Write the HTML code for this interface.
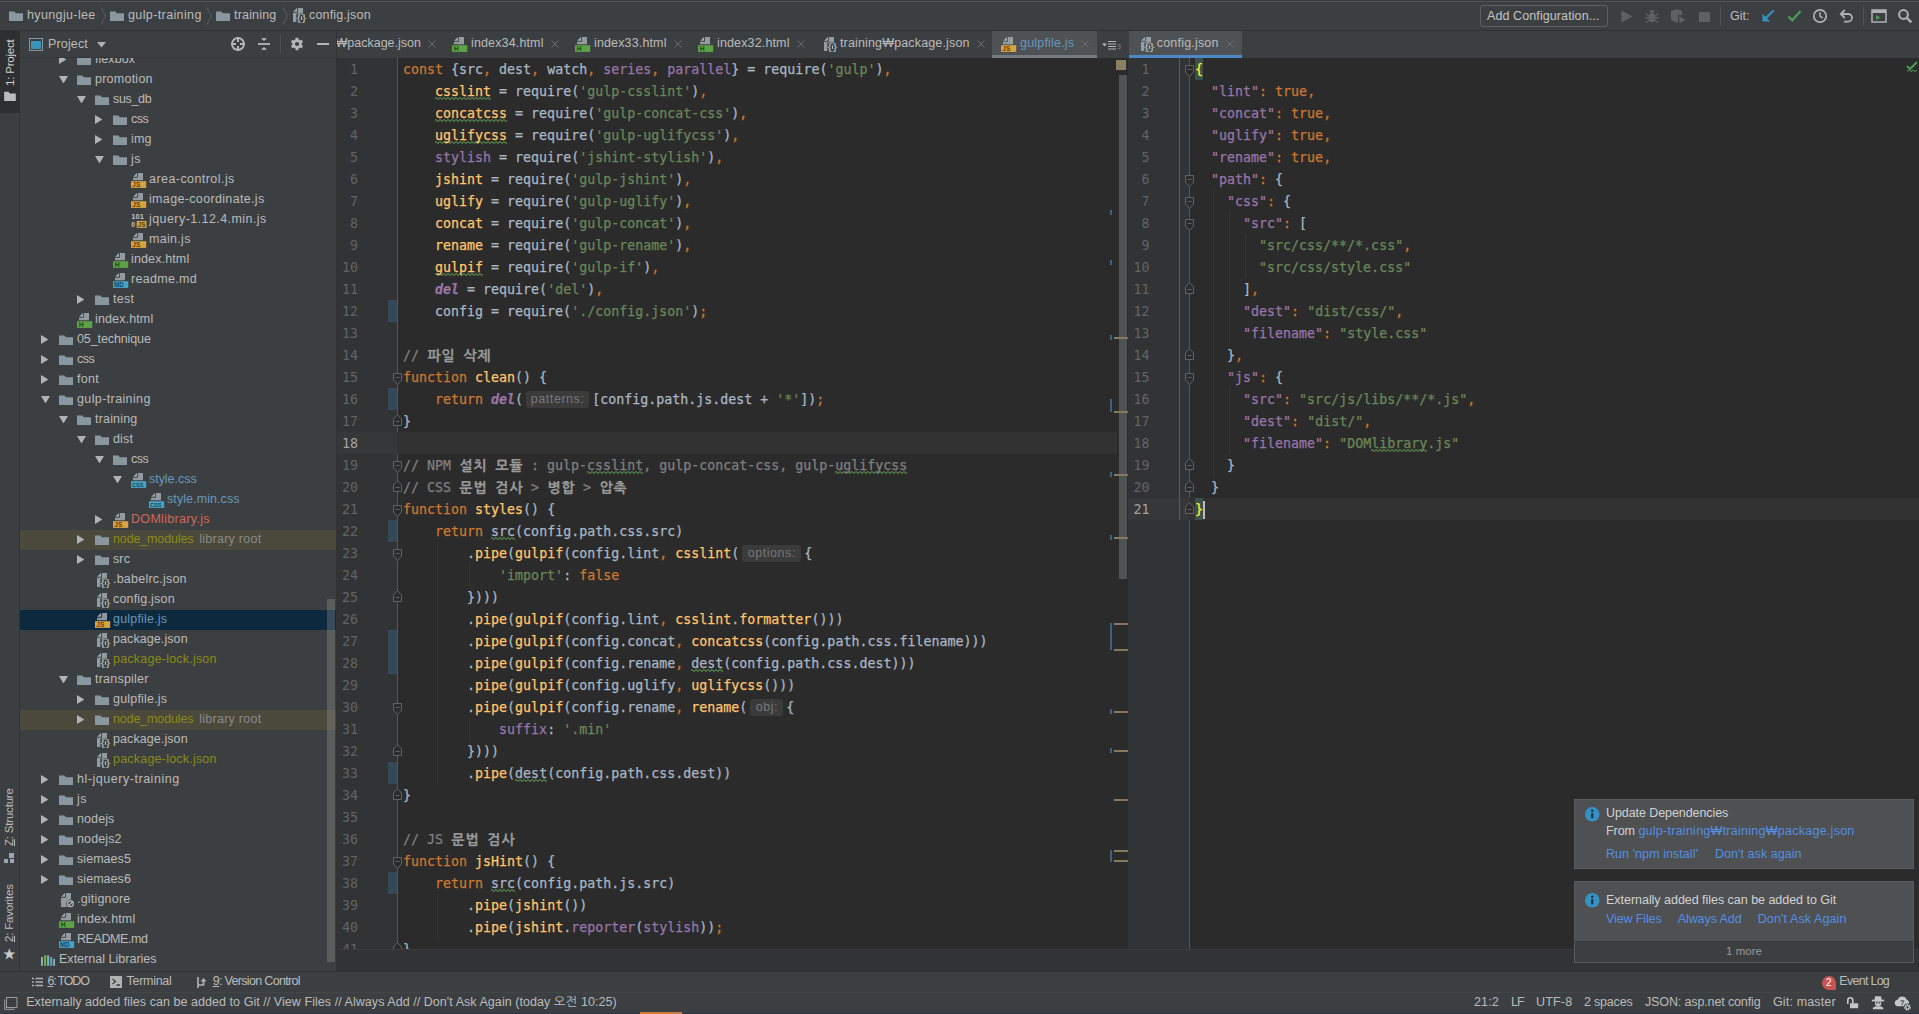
<!DOCTYPE html>
<html lang="ko"><head><meta charset="utf-8"><title>gulpfile.js - WebStorm</title>
<style>
*{box-sizing:border-box;margin:0;padding:0}
html,body{width:1919px;height:1014px;overflow:hidden;background:#3c3f41}
body{position:relative;font-family:"Liberation Sans","NanumGothic","Noto Sans CJK KR",sans-serif;font-size:12.5px;color:#bbbbbb;line-height:20px}
.abs{position:absolute}
.ui{font-family:"Liberation Sans","NanumGothic","Noto Sans CJK KR",sans-serif;font-size:12px;color:#bbb;white-space:pre}
/* top nav */
#nav{left:0;top:0;width:1919px;height:31px;background:#3c3f41;border-top:1px solid #3a3b3c;border-bottom:1px solid #323232;box-shadow:inset 0 1px 0 #515354}
#nav .t{position:absolute;top:4px;line-height:20px;white-space:pre}
/* left stripe */
#lstripe{left:0;top:31px;width:20px;height:940px;background:#3c3f41;border-right:1px solid #323232}
#ptab{left:0;top:31px;width:20px;height:82px;background:#2d2f30}
.vtxt{position:absolute;transform-origin:0 0;transform:rotate(-90deg);white-space:pre;line-height:14px;font-size:11.5px}
/* project panel */
#proj{left:20px;top:31px;width:316px;height:940px;background:#3c3f41;overflow:hidden}
#phead{left:0;top:0;width:316px;height:27px;background:#3c3f41;z-index:5;border-bottom:1px solid #343638}
.row{position:absolute;left:0;width:316px;height:20px;line-height:18px;white-space:pre}
.row .lbl{position:absolute;top:0}
.row svg{position:absolute}
.sel{background:#0d293e}
.lib{background:#4b483c}
.c-blue{color:#6897bb}.c-olive{color:#8a8b16}.c-red{color:#d1675a}.c-gray{color:#8a8a8a}
/* editors */
.tabs{background:#3c3f41;height:27px;top:31px}
.tab{position:absolute;top:0;height:26px;line-height:25px;white-space:pre}
.ed{background:#2b2b2b;top:58px;height:891px;overflow:hidden}
.gut{background:#313335;top:0;height:891px}
.ln{position:absolute;height:22px;line-height:22px;font-family:"DejaVu Sans Mono","Liberation Mono",monospace;font-size:13.3px;color:#606366;text-align:right;white-space:pre}
.cl{position:absolute;height:22px;line-height:22px;font-family:"DejaVu Sans Mono","Liberation Mono","NanumGothicCoding","Noto Sans CJK KR",monospace;font-size:13.3px;color:#a9b7c6;white-space:pre;-webkit-text-stroke:0.25px}
.k{color:#cc7832}.s{color:#6a8759}.f{color:#ffc66d}.p{color:#9876aa}.c{color:#808080}.n{color:#6897bb}
.bi{color:#9876aa;font-weight:bold;font-style:italic}
.w{background:linear-gradient(45deg,transparent 38%,#4b6b41 38%,#4b6b41 62%,transparent 62%) 0 100%/4px 3px repeat-x,linear-gradient(-45deg,transparent 38%,#4b6b41 38%,#4b6b41 62%,transparent 62%) 2px 100%/4px 3px repeat-x;padding-bottom:1px}
.hint{display:inline-block;font-family:"Liberation Sans",sans-serif;font-size:12.5px;letter-spacing:.55px;color:#787878;background:#3b3b3b;border-radius:3px;height:17px;line-height:16px;-webkit-text-stroke:0;vertical-align:top;margin-top:2px;text-align:center}
.kr{font-family:"NanumGothicCoding","NanumGothic","Noto Sans CJK KR",monospace;font-weight:bold;color:#9a9a9a;font-size:14px;line-height:20px}
.curline{background:#323232;height:22px}
.vcs{background:#35485a;width:9px;height:22px}
.guide{background:#373737;width:1px}
/* bottom */
#hs{left:337px;top:949px;width:1582px;height:23px;background:#313335}
#tools{left:0;top:972px;width:1919px;height:20px;background:#3c3f41}
#tools .bt{line-height:19px}
#status{left:0;top:992px;width:1919px;height:22px;background:#3c3f41;border-top:1px solid #434547}
.bt{position:absolute;line-height:20px;white-space:pre;top:0}
/* notifications */
.note{background:#4e5052;border:1px solid #595b5d}
.link{color:#548fe3}
</style></head><body>
<div class="abs " id="nav" style=""><svg class="abs" style="left:9px;top:9.5px" width="14" height="10.5" viewBox="0 0 14 10.5"><path d="M0 0.600h5.400l1.400 1.700H14v8.200H0z" fill="#8b979e"/></svg><span class="t" style="letter-spacing:0.369px;left:27px">hyungju-lee</span><svg class="abs" style="left:100px;top:6px" width="7" height="18" viewBox="0 0 7 18"><path d="M1 0.500l4.500 8.500L1 17.500" fill="none" stroke="#5c5f61" stroke-width="1"/></svg><svg class="abs" style="left:110px;top:9.5px" width="14" height="10.5" viewBox="0 0 14 10.5"><path d="M0 0.600h5.400l1.400 1.700H14v8.200H0z" fill="#8b979e"/></svg><span class="t" style="letter-spacing:0.385px;left:128px">gulp-training</span><svg class="abs" style="left:206px;top:6px" width="7" height="18" viewBox="0 0 7 18"><path d="M1 0.500l4.500 8.500L1 17.500" fill="none" stroke="#5c5f61" stroke-width="1"/></svg><svg class="abs" style="left:216px;top:9.5px" width="14" height="10.5" viewBox="0 0 14 10.5"><path d="M0 0.600h5.400l1.400 1.700H14v8.200H0z" fill="#8b979e"/></svg><span class="t" style="letter-spacing:0.188px;left:234px">training</span><svg class="abs" style="left:281.5px;top:6px" width="7" height="18" viewBox="0 0 7 18"><path d="M1 0.500l4.500 8.500L1 17.500" fill="none" stroke="#5c5f61" stroke-width="1"/></svg><svg class="abs" style="left:291px;top:6px" width="16" height="16" viewBox="0 0 16 16"><path d="M6.900 1H12v14H2V5.700h4.900z" fill="#a3acb2" opacity=".85"/><path d="M6 1v3.800H2.200z" fill="#a3acb2"/><rect x="5.300" y="6.600" width="10.700" height="9.400" fill="#3c3f41"/><text x="5.300" y="14.400" font-family="Liberation Sans, sans-serif" font-size="8.800" fill="#b0b9bf" textLength="10.200" lengthAdjust="spacingAndGlyphs">{}</text><rect x="9.900" y="9.300" width="1.200" height="3.600" fill="#b0b9bf"/></svg><span class="t" style="letter-spacing:0.185px;left:309px">config.json</span><div class="abs" style="left:1480px;top:4px;width:128px;height:22px;border:1px solid #5e6060;border-radius:3px"></div><span class="t" style="letter-spacing:0.095px;left:1487px;top:5px;font-size:12.5px;color:#c4c4c4">Add Configuration...</span><svg class="abs" style="left:1621px;top:9px" width="12" height="13" viewBox="0 0 12 13"><path d="M0.500 0.500v12l11-6z" fill="#5e6162"/></svg><svg class="abs" style="left:1644px;top:7px" width="16" height="16" viewBox="0 0 16 16"><ellipse cx="8" cy="9.700" rx="3.700" ry="4.600" fill="#5e6162"/><path d="M5.500 4.500a2.500 2.500 0 0 1 5 0z" fill="#5e6162"/><path d="M1.700 5.500l3 2.200M14.300 5.500l-3 2.200M1.200 10h3.500M14.800 10h-3.500M2.200 14.500l3-2.200M13.800 14.500l-3-2.200" stroke="#5e6162" stroke-width="1.300"/></svg><svg class="abs" style="left:1670px;top:7px" width="16" height="16" viewBox="0 0 16 16"><path d="M1 3l6-2 5 2v4H8v7l-1 1-6-3z" fill="#5e6162"/><path d="M9.300 8v7.500l6-3.800z" fill="#5e6162"/></svg><div class="abs" style="left:1699px;top:10.700px;width:10.500px;height:10.300px;background:#5e6162"></div><div class="abs" style="left:1720px;top:5px;width:1px;height:20px;background:#515355"></div><span class="t" style="letter-spacing:0.037px;left:1730px;top:5px;font-size:12.5px">Git:</span><svg class="abs" style="left:1761px;top:8px" width="14" height="14" viewBox="0 0 14 14"><path d="M12.500 1.500L5 9" fill="none" stroke="#3592c4" stroke-width="2.200"/><path d="M1.500 12.500V4.800L9.200 12.500z" fill="#3592c4"/></svg><svg class="abs" style="left:1787px;top:8px" width="15" height="14" viewBox="0 0 15 14"><path d="M1.500 7.500l3.700 3.800 8.300-9.300" fill="none" stroke="#499c54" stroke-width="2.300"/></svg><svg class="abs" style="left:1812px;top:7px" width="16" height="16" viewBox="0 0 16 16"><circle cx="8" cy="8" r="6.200" fill="none" stroke="#afb1b3" stroke-width="1.700"/><path d="M8 4.300V8.300l2.800 1.700" fill="none" stroke="#afb1b3" stroke-width="1.500"/></svg><svg class="abs" style="left:1838px;top:7px" width="16" height="16" viewBox="0 0 16 16"><path d="M3 6h7.200a3.800 3.800 0 0 1 0 7.600H6" fill="none" stroke="#afb1b3" stroke-width="1.800"/><path d="M6.800 2L2.800 6l4 4" fill="none" stroke="#afb1b3" stroke-width="1.800"/></svg><div class="abs" style="left:1863px;top:5px;width:1px;height:20px;background:#515355"></div><svg class="abs" style="left:1871px;top:8px" width="16" height="14" viewBox="0 0 16 14"><rect x="1" y="1" width="14" height="12" fill="none" stroke="#afb1b3" stroke-width="1.500"/><rect x="1" y="1" width="14" height="3" fill="#afb1b3"/><path d="M5 6v5l4.500-2.500z" fill="#499c54"/></svg><svg class="abs" style="left:1897px;top:7px" width="16" height="16" viewBox="0 0 16 16"><circle cx="6.500" cy="6.500" r="4.400" fill="none" stroke="#afb1b3" stroke-width="2"/><path d="M9.800 9.800l4.600 4.600" stroke="#afb1b3" stroke-width="2.400"/></svg></div>
<div class="abs " id="lstripe" style=""></div>
<div class="abs " id="ptab" style=""></div>
<div class="vtxt abs" style="left:3px;top:86px;color:#d0d0d0;letter-spacing:-0.200px">1: Project</div>
<svg class="abs" style="left:4px;top:91px" width="12" height="10" viewBox="0 0 14 12"><path d="M0 1h5.200l1.600 2H14v9H0z" fill="#b8bcbf"/></svg>
<div class="vtxt abs" style="left:2px;top:846px;letter-spacing:-0.200px"><u>Z</u>: Structure</div>
<svg class="abs" style="left:4px;top:852.500px" width="11" height="11" viewBox="0 0 11 11"><rect x="5" y="0" width="5" height="5" fill="#9aa7b0"/><rect x="0" y="6" width="4" height="4" fill="#9aa7b0"/><rect x="6" y="6" width="4" height="4" fill="#9aa7b0"/></svg>
<div class="vtxt abs" style="left:2px;top:942px;letter-spacing:-0.200px"><u>2</u>: Favorites</div>
<div class="abs" style="left:2.500px;top:945.500px;font-size:14.500px;line-height:16px;color:#c8c8c8">★</div>
<div class="abs " id="proj" style=""><div class="row" style="top:19px"><svg class="abs" style="left:38.8px;top:4.5px" width="7.500" height="9" viewBox="0 0 7.5 9"><path d="M0 0v9L7.500 4.500z" fill="#b0b3b5"/></svg><svg class="abs" style="left:57px;top:4.5px" width="14" height="10.5" viewBox="0 0 14 10.5"><path d="M0 0.600h5.400l1.400 1.700H14v8.200H0z" fill="#8b979e"/></svg><span class="lbl" style="letter-spacing:0.056px;left:75px">flexbox</span></div>
<div class="row" style="top:39px"><svg class="abs" style="left:39.0px;top:5.5px" width="9" height="7.500" viewBox="0 0 9 7.5"><path d="M0 0h9L4.500 7.500z" fill="#b0b3b5"/></svg><svg class="abs" style="left:57px;top:4.5px" width="14" height="10.5" viewBox="0 0 14 10.5"><path d="M0 0.600h5.400l1.400 1.700H14v8.200H0z" fill="#8b979e"/></svg><span class="lbl" style="letter-spacing:0.245px;left:75px">promotion</span></div>
<div class="row" style="top:59px"><svg class="abs" style="left:57.0px;top:5.5px" width="9" height="7.500" viewBox="0 0 9 7.5"><path d="M0 0h9L4.500 7.500z" fill="#b0b3b5"/></svg><svg class="abs" style="left:75px;top:4.5px" width="14" height="10.5" viewBox="0 0 14 10.5"><path d="M0 0.600h5.400l1.400 1.700H14v8.200H0z" fill="#8b979e"/></svg><span class="lbl" style="letter-spacing:-0.335px;left:93px">sus_db</span></div>
<div class="row" style="top:79px"><svg class="abs" style="left:74.8px;top:4.5px" width="7.500" height="9" viewBox="0 0 7.5 9"><path d="M0 0v9L7.500 4.500z" fill="#b0b3b5"/></svg><svg class="abs" style="left:93px;top:4.5px" width="14" height="10.5" viewBox="0 0 14 10.5"><path d="M0 0.600h5.400l1.400 1.700H14v8.200H0z" fill="#8b979e"/></svg><span class="lbl" style="letter-spacing:-0.483px;left:111px">css</span></div>
<div class="row" style="top:99px"><svg class="abs" style="left:74.8px;top:4.5px" width="7.500" height="9" viewBox="0 0 7.5 9"><path d="M0 0v9L7.500 4.500z" fill="#b0b3b5"/></svg><svg class="abs" style="left:93px;top:4.5px" width="14" height="10.5" viewBox="0 0 14 10.5"><path d="M0 0.600h5.400l1.400 1.700H14v8.200H0z" fill="#8b979e"/></svg><span class="lbl" style="letter-spacing:0.181px;left:111px">img</span></div>
<div class="row" style="top:119px"><svg class="abs" style="left:75.0px;top:5.5px" width="9" height="7.500" viewBox="0 0 9 7.5"><path d="M0 0h9L4.500 7.500z" fill="#b0b3b5"/></svg><svg class="abs" style="left:93px;top:4.5px" width="14" height="10.5" viewBox="0 0 14 10.5"><path d="M0 0.600h5.400l1.400 1.700H14v8.200H0z" fill="#8b979e"/></svg><span class="lbl" style="letter-spacing:0.384px;left:111px">js</span></div>
<div class="row" style="top:139px"><svg class="abs" style="left:111px;top:2px" width="16" height="16" viewBox="0 0 16 16"><path d="M6.900 1H12v7.200H2V5.700h4.900z" fill="#a3acb2" opacity=".85"/><path d="M6 1v3.800H2.200z" fill="#a3acb2"/><rect x="0" y="9.200" width="15.200" height="6.700" fill="#d9a343"/><text x="1.3" y="15.200" font-family="Liberation Sans, sans-serif" font-weight="bold" font-size="6.5" fill="#5c4314">JS</text></svg><span class="lbl" style="letter-spacing:0.44px;left:129px">area-control.js</span></div>
<div class="row" style="top:159px"><svg class="abs" style="left:111px;top:2px" width="16" height="16" viewBox="0 0 16 16"><path d="M6.900 1H12v7.200H2V5.700h4.900z" fill="#a3acb2" opacity=".85"/><path d="M6 1v3.800H2.200z" fill="#a3acb2"/><rect x="0" y="9.200" width="15.200" height="6.700" fill="#d9a343"/><text x="1.3" y="15.200" font-family="Liberation Sans, sans-serif" font-weight="bold" font-size="6.5" fill="#5c4314">JS</text></svg><span class="lbl" style="letter-spacing:0.342px;left:129px">image-coordinate.js</span></div>
<div class="row" style="top:179px"><svg class="abs" style="left:111px;top:2px" width="16" height="16" viewBox="0 0 16 16"><text x="0.300" y="6.600" font-family="Liberation Sans, sans-serif" font-weight="bold" font-size="6.800" fill="#bcc4c9" textLength="12.500" lengthAdjust="spacingAndGlyphs">101</text><text x="0.300" y="14.600" font-family="Liberation Sans, sans-serif" font-weight="bold" font-size="6.800" fill="#bcc4c9">0</text><rect x="5.700" y="8.900" width="9.800" height="7" fill="#d9a343"/><text x="6.500" y="15" font-family="Liberation Sans, sans-serif" font-weight="bold" font-size="6.500" fill="#5c4314">JS</text></svg><span class="lbl" style="letter-spacing:0.431px;left:129px">jquery-1.12.4.min.js</span></div>
<div class="row" style="top:199px"><svg class="abs" style="left:111px;top:2px" width="16" height="16" viewBox="0 0 16 16"><path d="M6.900 1H12v7.200H2V5.700h4.900z" fill="#a3acb2" opacity=".85"/><path d="M6 1v3.800H2.200z" fill="#a3acb2"/><rect x="0" y="9.200" width="15.200" height="6.700" fill="#d9a343"/><text x="1.3" y="15.200" font-family="Liberation Sans, sans-serif" font-weight="bold" font-size="6.5" fill="#5c4314">JS</text></svg><span class="lbl" style="letter-spacing:0.301px;left:129px">main.js</span></div>
<div class="row" style="top:219px"><svg class="abs" style="left:93px;top:2px" width="16" height="16" viewBox="0 0 16 16"><path d="M6.900 1H12v7.200H2V5.700h4.900z" fill="#a3acb2" opacity=".85"/><path d="M6 1v3.800H2.200z" fill="#a3acb2"/><rect x="0" y="9.200" width="15.200" height="6.700" fill="#5ba346"/><text x="1.8" y="15.200" font-family="Liberation Sans, sans-serif" font-weight="bold" font-size="6.8" fill="#1f4d16">H</text></svg><span class="lbl" style="letter-spacing:0.132px;left:111px">index.html</span></div>
<div class="row" style="top:239px"><svg class="abs" style="left:93px;top:2px" width="16" height="16" viewBox="0 0 16 16"><path d="M6.900 1H12v7.200H2V5.700h4.900z" fill="#a3acb2" opacity=".85"/><path d="M6 1v3.800H2.200z" fill="#a3acb2"/><rect x="0" y="9.200" width="15.200" height="6.700" fill="#45a5c9"/><text x="1" y="15.200" font-family="Liberation Sans, sans-serif" font-weight="bold" font-size="6.3" fill="#14495f">MD</text></svg><span class="lbl" style="letter-spacing:0.307px;left:111px">readme.md</span></div>
<div class="row" style="top:259px"><svg class="abs" style="left:56.8px;top:4.5px" width="7.500" height="9" viewBox="0 0 7.5 9"><path d="M0 0v9L7.500 4.500z" fill="#b0b3b5"/></svg><svg class="abs" style="left:75px;top:4.5px" width="14" height="10.5" viewBox="0 0 14 10.5"><path d="M0 0.600h5.400l1.400 1.700H14v8.200H0z" fill="#8b979e"/></svg><span class="lbl" style="letter-spacing:0.236px;left:93px">test</span></div>
<div class="row" style="top:279px"><svg class="abs" style="left:57px;top:2px" width="16" height="16" viewBox="0 0 16 16"><path d="M6.900 1H12v7.200H2V5.700h4.900z" fill="#a3acb2" opacity=".85"/><path d="M6 1v3.800H2.200z" fill="#a3acb2"/><rect x="0" y="9.200" width="15.200" height="6.700" fill="#5ba346"/><text x="1.8" y="15.200" font-family="Liberation Sans, sans-serif" font-weight="bold" font-size="6.8" fill="#1f4d16">H</text></svg><span class="lbl" style="letter-spacing:0.132px;left:75px">index.html</span></div>
<div class="row" style="top:299px"><svg class="abs" style="left:20.8px;top:4.5px" width="7.500" height="9" viewBox="0 0 7.5 9"><path d="M0 0v9L7.500 4.500z" fill="#b0b3b5"/></svg><svg class="abs" style="left:39px;top:4.5px" width="14" height="10.5" viewBox="0 0 14 10.5"><path d="M0 0.600h5.400l1.400 1.700H14v8.200H0z" fill="#8b979e"/></svg><span class="lbl" style="letter-spacing:-0.107px;left:57px">05_technique</span></div>
<div class="row" style="top:319px"><svg class="abs" style="left:20.8px;top:4.5px" width="7.500" height="9" viewBox="0 0 7.5 9"><path d="M0 0v9L7.500 4.500z" fill="#b0b3b5"/></svg><svg class="abs" style="left:39px;top:4.5px" width="14" height="10.5" viewBox="0 0 14 10.5"><path d="M0 0.600h5.400l1.400 1.700H14v8.200H0z" fill="#8b979e"/></svg><span class="lbl" style="letter-spacing:-0.483px;left:57px">css</span></div>
<div class="row" style="top:339px"><svg class="abs" style="left:20.8px;top:4.5px" width="7.500" height="9" viewBox="0 0 7.5 9"><path d="M0 0v9L7.500 4.500z" fill="#b0b3b5"/></svg><svg class="abs" style="left:39px;top:4.5px" width="14" height="10.5" viewBox="0 0 14 10.5"><path d="M0 0.600h5.400l1.400 1.700H14v8.200H0z" fill="#8b979e"/></svg><span class="lbl" style="letter-spacing:0.285px;left:57px">font</span></div>
<div class="row" style="top:359px"><svg class="abs" style="left:21.0px;top:5.5px" width="9" height="7.500" viewBox="0 0 9 7.5"><path d="M0 0h9L4.500 7.500z" fill="#b0b3b5"/></svg><svg class="abs" style="left:39px;top:4.5px" width="14" height="10.5" viewBox="0 0 14 10.5"><path d="M0 0.600h5.400l1.400 1.700H14v8.200H0z" fill="#8b979e"/></svg><span class="lbl" style="letter-spacing:0.385px;left:57px">gulp-training</span></div>
<div class="row" style="top:379px"><svg class="abs" style="left:39.0px;top:5.5px" width="9" height="7.500" viewBox="0 0 9 7.5"><path d="M0 0h9L4.500 7.500z" fill="#b0b3b5"/></svg><svg class="abs" style="left:57px;top:4.5px" width="14" height="10.5" viewBox="0 0 14 10.5"><path d="M0 0.600h5.400l1.400 1.700H14v8.200H0z" fill="#8b979e"/></svg><span class="lbl" style="letter-spacing:0.188px;left:75px">training</span></div>
<div class="row" style="top:399px"><svg class="abs" style="left:57.0px;top:5.5px" width="9" height="7.500" viewBox="0 0 9 7.5"><path d="M0 0h9L4.500 7.500z" fill="#b0b3b5"/></svg><svg class="abs" style="left:75px;top:4.5px" width="14" height="10.5" viewBox="0 0 14 10.5"><path d="M0 0.600h5.400l1.400 1.700H14v8.200H0z" fill="#8b979e"/></svg><span class="lbl" style="letter-spacing:0.162px;left:93px">dist</span></div>
<div class="row" style="top:419px"><svg class="abs" style="left:75.0px;top:5.5px" width="9" height="7.500" viewBox="0 0 9 7.5"><path d="M0 0h9L4.500 7.500z" fill="#b0b3b5"/></svg><svg class="abs" style="left:93px;top:4.5px" width="14" height="10.5" viewBox="0 0 14 10.5"><path d="M0 0.600h5.400l1.400 1.700H14v8.200H0z" fill="#8b979e"/></svg><span class="lbl" style="letter-spacing:-0.483px;left:111px">css</span></div>
<div class="row" style="top:439px"><svg class="abs" style="left:93.0px;top:5.5px" width="9" height="7.500" viewBox="0 0 9 7.5"><path d="M0 0h9L4.500 7.500z" fill="#b0b3b5"/></svg><svg class="abs" style="left:111px;top:2px" width="16" height="16" viewBox="0 0 16 16"><path d="M6.900 1H12v7.200H2V5.700h4.900z" fill="#a3acb2" opacity=".85"/><path d="M6 1v3.800H2.200z" fill="#a3acb2"/><rect x="0" y="9.200" width="15.200" height="6.700" fill="#45a5c9"/><text x="1" y="15.200" font-family="Liberation Sans, sans-serif" font-weight="bold" font-size="5.6" fill="#14495f">CSS</text></svg><span class="lbl c-blue" style="letter-spacing:-0.037px;left:129px">style.css</span></div>
<div class="row" style="top:459px"><svg class="abs" style="left:129px;top:2px" width="16" height="16" viewBox="0 0 16 16"><path d="M6.900 1H12v7.200H2V5.700h4.900z" fill="#a3acb2" opacity=".85"/><path d="M6 1v3.800H2.200z" fill="#a3acb2"/><rect x="0" y="9.200" width="15.200" height="6.700" fill="#45a5c9"/><text x="1" y="15.200" font-family="Liberation Sans, sans-serif" font-weight="bold" font-size="5.6" fill="#14495f">CSS</text></svg><span class="lbl c-blue" style="letter-spacing:0.081px;left:147px">style.min.css</span></div>
<div class="row" style="top:479px"><svg class="abs" style="left:74.8px;top:4.5px" width="7.500" height="9" viewBox="0 0 7.5 9"><path d="M0 0v9L7.500 4.500z" fill="#b0b3b5"/></svg><svg class="abs" style="left:93px;top:2px" width="16" height="16" viewBox="0 0 16 16"><path d="M6.900 1H12v7.200H2V5.700h4.900z" fill="#a3acb2" opacity=".85"/><path d="M6 1v3.800H2.200z" fill="#a3acb2"/><rect x="0" y="9.200" width="15.200" height="6.700" fill="#d9a343"/><text x="1.3" y="15.200" font-family="Liberation Sans, sans-serif" font-weight="bold" font-size="6.5" fill="#5c4314">JS</text></svg><span class="lbl c-red" style="letter-spacing:0.317px;left:111px">DOMlibrary.js</span></div>
<div class="row lib" style="top:499px"><svg class="abs" style="left:56.8px;top:4.5px" width="7.500" height="9" viewBox="0 0 7.5 9"><path d="M0 0v9L7.500 4.500z" fill="#b0b3b5"/></svg><svg class="abs" style="left:75px;top:4.5px" width="14" height="10.5" viewBox="0 0 14 10.5"><path d="M0 0.600h5.400l1.400 1.700H14v8.200H0z" fill="#8b979e"/></svg><span class="lbl c-olive" style="letter-spacing:-0.135px;left:93px">node_modules</span><span class="lbl c-gray" style="letter-spacing:0.254px;left:179.3px">library root</span></div>
<div class="row" style="top:519px"><svg class="abs" style="left:56.8px;top:4.5px" width="7.500" height="9" viewBox="0 0 7.5 9"><path d="M0 0v9L7.500 4.500z" fill="#b0b3b5"/></svg><svg class="abs" style="left:75px;top:4.5px" width="14" height="10.5" viewBox="0 0 14 10.5"><path d="M0 0.600h5.400l1.400 1.700H14v8.200H0z" fill="#8b979e"/></svg><span class="lbl" style="letter-spacing:0.109px;left:93px">src</span></div>
<div class="row" style="top:539px"><svg class="abs" style="left:75px;top:2px" width="16" height="16" viewBox="0 0 16 16"><path d="M6.900 1H12v14H2V5.700h4.900z" fill="#a3acb2" opacity=".85"/><path d="M6 1v3.800H2.200z" fill="#a3acb2"/><rect x="5.300" y="6.600" width="10.700" height="9.400" fill="#3c3f41"/><text x="5.300" y="14.400" font-family="Liberation Sans, sans-serif" font-size="8.800" fill="#b0b9bf" textLength="10.200" lengthAdjust="spacingAndGlyphs">{}</text><rect x="9.900" y="9.300" width="1.200" height="3.600" fill="#b0b9bf"/></svg><span class="lbl" style="letter-spacing:0.225px;left:93px">.babelrc.json</span></div>
<div class="row" style="top:559px"><svg class="abs" style="left:75px;top:2px" width="16" height="16" viewBox="0 0 16 16"><path d="M6.900 1H12v14H2V5.700h4.900z" fill="#a3acb2" opacity=".85"/><path d="M6 1v3.800H2.200z" fill="#a3acb2"/><rect x="5.300" y="6.600" width="10.700" height="9.400" fill="#3c3f41"/><text x="5.300" y="14.400" font-family="Liberation Sans, sans-serif" font-size="8.800" fill="#b0b9bf" textLength="10.200" lengthAdjust="spacingAndGlyphs">{}</text><rect x="9.900" y="9.300" width="1.200" height="3.600" fill="#b0b9bf"/></svg><span class="lbl" style="letter-spacing:0.185px;left:93px">config.json</span></div>
<div class="row sel" style="top:579px"><svg class="abs" style="left:75px;top:2px" width="16" height="16" viewBox="0 0 16 16"><path d="M6.900 1H12v7.200H2V5.700h4.900z" fill="#a3acb2" opacity=".85"/><path d="M6 1v3.800H2.200z" fill="#a3acb2"/><rect x="0" y="9.200" width="15.200" height="6.700" fill="#d9a343"/><text x="1.3" y="15.200" font-family="Liberation Sans, sans-serif" font-weight="bold" font-size="6.5" fill="#5c4314">JS</text></svg><span class="lbl c-blue" style="letter-spacing:0.198px;left:93px">gulpfile.js</span></div>
<div class="row" style="top:599px"><svg class="abs" style="left:75px;top:2px" width="16" height="16" viewBox="0 0 16 16"><path d="M6.900 1H12v14H2V5.700h4.900z" fill="#a3acb2" opacity=".85"/><path d="M6 1v3.800H2.200z" fill="#a3acb2"/><rect x="5.300" y="6.600" width="10.700" height="9.400" fill="#3c3f41"/><text x="5.300" y="14.400" font-family="Liberation Sans, sans-serif" font-size="8.800" fill="#b0b9bf" textLength="10.200" lengthAdjust="spacingAndGlyphs">{}</text><rect x="9.900" y="9.300" width="1.200" height="3.600" fill="#b0b9bf"/></svg><span class="lbl" style="letter-spacing:0.086px;left:93px">package.json</span></div>
<div class="row" style="top:619px"><svg class="abs" style="left:75px;top:2px" width="16" height="16" viewBox="0 0 16 16"><path d="M6.900 1H12v14H2V5.700h4.900z" fill="#a3acb2" opacity=".85"/><path d="M6 1v3.800H2.200z" fill="#a3acb2"/><rect x="5.300" y="6.600" width="10.700" height="9.400" fill="#3c3f41"/><text x="5.300" y="14.400" font-family="Liberation Sans, sans-serif" font-size="8.800" fill="#b0b9bf" textLength="10.200" lengthAdjust="spacingAndGlyphs">{}</text><rect x="9.900" y="9.300" width="1.200" height="3.600" fill="#b0b9bf"/></svg><span class="lbl c-olive" style="letter-spacing:0.214px;left:93px">package-lock.json</span></div>
<div class="row" style="top:639px"><svg class="abs" style="left:39.0px;top:5.5px" width="9" height="7.500" viewBox="0 0 9 7.5"><path d="M0 0h9L4.500 7.500z" fill="#b0b3b5"/></svg><svg class="abs" style="left:57px;top:4.5px" width="14" height="10.5" viewBox="0 0 14 10.5"><path d="M0 0.600h5.400l1.400 1.700H14v8.200H0z" fill="#8b979e"/></svg><span class="lbl" style="letter-spacing:0.228px;left:75px">transpiler</span></div>
<div class="row" style="top:659px"><svg class="abs" style="left:56.8px;top:4.5px" width="7.500" height="9" viewBox="0 0 7.5 9"><path d="M0 0v9L7.500 4.500z" fill="#b0b3b5"/></svg><svg class="abs" style="left:75px;top:4.5px" width="14" height="10.5" viewBox="0 0 14 10.5"><path d="M0 0.600h5.400l1.400 1.700H14v8.200H0z" fill="#8b979e"/></svg><span class="lbl" style="letter-spacing:0.198px;left:93px">gulpfile.js</span></div>
<div class="row lib" style="top:679px"><svg class="abs" style="left:56.8px;top:4.5px" width="7.500" height="9" viewBox="0 0 7.5 9"><path d="M0 0v9L7.500 4.500z" fill="#b0b3b5"/></svg><svg class="abs" style="left:75px;top:4.5px" width="14" height="10.5" viewBox="0 0 14 10.5"><path d="M0 0.600h5.400l1.400 1.700H14v8.200H0z" fill="#8b979e"/></svg><span class="lbl c-olive" style="letter-spacing:-0.135px;left:93px">node_modules</span><span class="lbl c-gray" style="letter-spacing:0.254px;left:179.3px">library root</span></div>
<div class="row" style="top:699px"><svg class="abs" style="left:75px;top:2px" width="16" height="16" viewBox="0 0 16 16"><path d="M6.900 1H12v14H2V5.700h4.900z" fill="#a3acb2" opacity=".85"/><path d="M6 1v3.800H2.200z" fill="#a3acb2"/><rect x="5.300" y="6.600" width="10.700" height="9.400" fill="#3c3f41"/><text x="5.300" y="14.400" font-family="Liberation Sans, sans-serif" font-size="8.800" fill="#b0b9bf" textLength="10.200" lengthAdjust="spacingAndGlyphs">{}</text><rect x="9.900" y="9.300" width="1.200" height="3.600" fill="#b0b9bf"/></svg><span class="lbl" style="letter-spacing:0.086px;left:93px">package.json</span></div>
<div class="row" style="top:719px"><svg class="abs" style="left:75px;top:2px" width="16" height="16" viewBox="0 0 16 16"><path d="M6.900 1H12v14H2V5.700h4.900z" fill="#a3acb2" opacity=".85"/><path d="M6 1v3.800H2.200z" fill="#a3acb2"/><rect x="5.300" y="6.600" width="10.700" height="9.400" fill="#3c3f41"/><text x="5.300" y="14.400" font-family="Liberation Sans, sans-serif" font-size="8.800" fill="#b0b9bf" textLength="10.200" lengthAdjust="spacingAndGlyphs">{}</text><rect x="9.900" y="9.300" width="1.200" height="3.600" fill="#b0b9bf"/></svg><span class="lbl c-olive" style="letter-spacing:0.214px;left:93px">package-lock.json</span></div>
<div class="row" style="top:739px"><svg class="abs" style="left:20.8px;top:4.5px" width="7.500" height="9" viewBox="0 0 7.5 9"><path d="M0 0v9L7.500 4.500z" fill="#b0b3b5"/></svg><svg class="abs" style="left:39px;top:4.5px" width="14" height="10.5" viewBox="0 0 14 10.5"><path d="M0 0.600h5.400l1.400 1.700H14v8.200H0z" fill="#8b979e"/></svg><span class="lbl" style="letter-spacing:0.533px;left:57px">hl-jquery-training</span></div>
<div class="row" style="top:759px"><svg class="abs" style="left:20.8px;top:4.5px" width="7.500" height="9" viewBox="0 0 7.5 9"><path d="M0 0v9L7.500 4.500z" fill="#b0b3b5"/></svg><svg class="abs" style="left:39px;top:4.5px" width="14" height="10.5" viewBox="0 0 14 10.5"><path d="M0 0.600h5.400l1.400 1.700H14v8.200H0z" fill="#8b979e"/></svg><span class="lbl" style="letter-spacing:0.384px;left:57px">js</span></div>
<div class="row" style="top:779px"><svg class="abs" style="left:20.8px;top:4.5px" width="7.500" height="9" viewBox="0 0 7.5 9"><path d="M0 0v9L7.500 4.500z" fill="#b0b3b5"/></svg><svg class="abs" style="left:39px;top:4.5px" width="14" height="10.5" viewBox="0 0 14 10.5"><path d="M0 0.600h5.400l1.400 1.700H14v8.200H0z" fill="#8b979e"/></svg><span class="lbl" style="letter-spacing:0.093px;left:57px">nodejs</span></div>
<div class="row" style="top:799px"><svg class="abs" style="left:20.8px;top:4.5px" width="7.500" height="9" viewBox="0 0 7.5 9"><path d="M0 0v9L7.500 4.500z" fill="#b0b3b5"/></svg><svg class="abs" style="left:39px;top:4.5px" width="14" height="10.5" viewBox="0 0 14 10.5"><path d="M0 0.600h5.400l1.400 1.700H14v8.200H0z" fill="#8b979e"/></svg><span class="lbl" style="letter-spacing:0.129px;left:57px">nodejs2</span></div>
<div class="row" style="top:819px"><svg class="abs" style="left:20.8px;top:4.5px" width="7.500" height="9" viewBox="0 0 7.5 9"><path d="M0 0v9L7.500 4.500z" fill="#b0b3b5"/></svg><svg class="abs" style="left:39px;top:4.5px" width="14" height="10.5" viewBox="0 0 14 10.5"><path d="M0 0.600h5.400l1.400 1.700H14v8.200H0z" fill="#8b979e"/></svg><span class="lbl" style="letter-spacing:0.05px;left:57px">siemaes5</span></div>
<div class="row" style="top:839px"><svg class="abs" style="left:20.8px;top:4.5px" width="7.500" height="9" viewBox="0 0 7.5 9"><path d="M0 0v9L7.500 4.500z" fill="#b0b3b5"/></svg><svg class="abs" style="left:39px;top:4.5px" width="14" height="10.5" viewBox="0 0 14 10.5"><path d="M0 0.600h5.400l1.400 1.700H14v8.200H0z" fill="#8b979e"/></svg><span class="lbl" style="letter-spacing:0.05px;left:57px">siemaes6</span></div>
<div class="row" style="top:859px"><svg class="abs" style="left:39px;top:2px" width="16" height="16" viewBox="0 0 16 16"><path d="M6.900 1H12v14H2V5.700h4.900z" fill="#a3acb2" opacity=".85"/><path d="M6 1v3.800H2.200z" fill="#a3acb2"/><circle cx="11.500" cy="11.800" r="4.300" fill="#3c3f41"/><circle cx="11.500" cy="11.800" r="2.900" fill="none" stroke="#bcc4c9" stroke-width="1.100"/><path d="M9.500 13.800l4-4" stroke="#bcc4c9" stroke-width="1.100"/></svg><span class="lbl" style="letter-spacing:0.196px;left:57px">.gitignore</span></div>
<div class="row" style="top:879px"><svg class="abs" style="left:39px;top:2px" width="16" height="16" viewBox="0 0 16 16"><path d="M6.900 1H12v7.200H2V5.700h4.900z" fill="#a3acb2" opacity=".85"/><path d="M6 1v3.800H2.200z" fill="#a3acb2"/><rect x="0" y="9.200" width="15.200" height="6.700" fill="#5ba346"/><text x="1.8" y="15.200" font-family="Liberation Sans, sans-serif" font-weight="bold" font-size="6.8" fill="#1f4d16">H</text></svg><span class="lbl" style="letter-spacing:0.132px;left:57px">index.html</span></div>
<div class="row" style="top:899px"><svg class="abs" style="left:39px;top:2px" width="16" height="16" viewBox="0 0 16 16"><path d="M6.900 1H12v7.200H2V5.700h4.900z" fill="#a3acb2" opacity=".85"/><path d="M6 1v3.800H2.200z" fill="#a3acb2"/><rect x="0" y="9.200" width="15.200" height="6.700" fill="#45a5c9"/><text x="1" y="15.200" font-family="Liberation Sans, sans-serif" font-weight="bold" font-size="6.3" fill="#14495f">MD</text></svg><span class="lbl" style="letter-spacing:-0.436px;left:57px">README.md</span></div>
<div class="row" style="top:919px"><svg class="abs" style="left:21px;top:2px" width="16" height="16" viewBox="0 0 16 16"><rect x="0" y="5" width="2" height="8.800" fill="#9aa7b0"/><rect x="3" y="3.300" width="2.200" height="10.500" fill="#62b543"/><rect x="6.100" y="3.300" width="2.100" height="10.500" fill="#9aa7b0"/><rect x="9.200" y="5" width="2" height="8.800" fill="#40b6e0"/><rect x="12.100" y="7" width="1.900" height="6.800" fill="#9aa7b0"/></svg><span class="lbl" style="letter-spacing:0.019px;left:39px">External Libraries</span></div><div class="abs " id="phead" style=""><svg class="abs" style="left:9px;top:7px" width="14" height="13" viewBox="0 0 14 13"><rect x="0.500" y="0.500" width="13" height="12" fill="#3c3f41" stroke="#8b979e"/><rect x="2" y="3" width="10" height="8" fill="#3b93b8"/></svg><span class="abs" style="letter-spacing:0.156px;left:28px;top:3px;line-height:20px;font-size:12.5px">Project</span><svg class="abs" style="left:77px;top:11px" width="9" height="6" viewBox="0 0 9 6"><path d="M0 0h9L4.500 5.500z" fill="#afb1b3"/></svg><svg class="abs" style="left:210px;top:5px" width="16" height="16" viewBox="0 0 16 16"><circle cx="8" cy="8" r="6" fill="none" stroke="#b4b6b8" stroke-width="1.800"/><path d="M8 1v5M8 10v5M1 8h5M10 8h5" stroke="#b4b6b8" stroke-width="2"/></svg><svg class="abs" style="left:237px;top:5px" width="14" height="16" viewBox="0 0 14 16"><path d="M1 8h12" stroke="#b4b6b8" stroke-width="1.800"/><path d="M4 2.200h6L7 5zM4 13.800h6L7 11z" fill="#b4b6b8"/></svg><div class="abs" style="left:260px;top:3px;width:1px;height:20px;background:#4b4d4f"></div><svg class="abs" style="left:269px;top:5px" width="16" height="16" viewBox="0 0 16 16"><g fill="#b4b6b8" transform="translate(8 8) scale(0.880) translate(-8 -8)"><circle cx="8" cy="8" r="5.400"/><rect x="6.300" y="0.900" width="3.400" height="14.200" rx="0.800"/><rect x="6.300" y="0.900" width="3.400" height="14.200" rx="0.800" transform="rotate(60 8 8)"/><rect x="6.300" y="0.900" width="3.400" height="14.200" rx="0.800" transform="rotate(120 8 8)"/></g><circle cx="8" cy="8" r="2.100" fill="#3c3f41"/></svg><div class="abs" style="left:297px;top:12px;width:12px;height:2px;background:#b4b6b8"></div></div><div class="abs" style="left:307px;top:568px;width:8px;height:363px;background:rgba(160,160,160,.3)"></div></div>
<div class="abs" style="left:336px;top:31px;width:1px;height:940px;background:#323232"></div>
<div class="abs" style="left:0;top:971px;width:337px;height:1px;background:#323232"></div><div class="abs tabs" style="left:337px;width:791px;overflow:hidden"><span class="tab" style="letter-spacing:0.002px;left:-1.5px">₩package.json</span><svg class="abs" style="left:91px;top:9px" width="8" height="8" viewBox="0 0 8 8"><path d="M0.5 0.5l7 7M7.5 0.5l-7 7" stroke="#686b6d" stroke-width="1"/></svg><svg class="abs" style="left:115px;top:5px" width="16" height="16" viewBox="0 0 16 16"><path d="M6.900 1H12v7.200H2V5.700h4.900z" fill="#a3acb2" opacity=".85"/><path d="M6 1v3.800H2.200z" fill="#a3acb2"/><rect x="0" y="9.200" width="15.200" height="6.700" fill="#5ba346"/><text x="1.8" y="15.200" font-family="Liberation Sans, sans-serif" font-weight="bold" font-size="6.8" fill="#1f4d16">H</text></svg><span class="tab" style="letter-spacing:0.144px;left:134px">index34.html</span><svg class="abs" style="left:214px;top:9px" width="8" height="8" viewBox="0 0 8 8"><path d="M0.5 0.5l7 7M7.5 0.5l-7 7" stroke="#686b6d" stroke-width="1"/></svg><svg class="abs" style="left:237.5px;top:5px" width="16" height="16" viewBox="0 0 16 16"><path d="M6.900 1H12v7.200H2V5.700h4.900z" fill="#a3acb2" opacity=".85"/><path d="M6 1v3.800H2.200z" fill="#a3acb2"/><rect x="0" y="9.200" width="15.200" height="6.700" fill="#5ba346"/><text x="1.8" y="15.200" font-family="Liberation Sans, sans-serif" font-weight="bold" font-size="6.8" fill="#1f4d16">H</text></svg><span class="tab" style="letter-spacing:0.144px;left:257px">index33.html</span><svg class="abs" style="left:337px;top:9px" width="8" height="8" viewBox="0 0 8 8"><path d="M0.5 0.5l7 7M7.5 0.5l-7 7" stroke="#686b6d" stroke-width="1"/></svg><svg class="abs" style="left:361px;top:5px" width="16" height="16" viewBox="0 0 16 16"><path d="M6.900 1H12v7.200H2V5.700h4.900z" fill="#a3acb2" opacity=".85"/><path d="M6 1v3.800H2.200z" fill="#a3acb2"/><rect x="0" y="9.200" width="15.200" height="6.700" fill="#5ba346"/><text x="1.8" y="15.200" font-family="Liberation Sans, sans-serif" font-weight="bold" font-size="6.8" fill="#1f4d16">H</text></svg><span class="tab" style="letter-spacing:0.144px;left:380px">index32.html</span><svg class="abs" style="left:460px;top:9px" width="8" height="8" viewBox="0 0 8 8"><path d="M0.5 0.5l7 7M7.5 0.5l-7 7" stroke="#686b6d" stroke-width="1"/></svg><svg class="abs" style="left:485px;top:5px" width="16" height="16" viewBox="0 0 16 16"><path d="M6.900 1H12v14H2V5.700h4.900z" fill="#a3acb2" opacity=".85"/><path d="M6 1v3.800H2.200z" fill="#a3acb2"/><rect x="5.300" y="6.600" width="10.700" height="9.400" fill="#3c3f41"/><text x="5.300" y="14.400" font-family="Liberation Sans, sans-serif" font-size="8.800" fill="#b0b9bf" textLength="10.200" lengthAdjust="spacingAndGlyphs">{}</text><rect x="9.900" y="9.300" width="1.200" height="3.600" fill="#b0b9bf"/></svg><span class="tab" style="letter-spacing:0.149px;left:503px">training₩package.json</span><svg class="abs" style="left:640px;top:9px" width="8" height="8" viewBox="0 0 8 8"><path d="M0.5 0.5l7 7M7.5 0.5l-7 7" stroke="#686b6d" stroke-width="1"/></svg><div class="abs" style="left:655px;top:0;width:105px;height:27px;background:#4e5254;border-bottom:3px solid #747a80"></div><svg class="abs" style="left:664px;top:5px" width="16" height="16" viewBox="0 0 16 16"><path d="M6.900 1H12v7.200H2V5.700h4.900z" fill="#a3acb2" opacity=".85"/><path d="M6 1v3.800H2.200z" fill="#a3acb2"/><rect x="0" y="9.200" width="15.200" height="6.700" fill="#d9a343"/><text x="1.3" y="15.200" font-family="Liberation Sans, sans-serif" font-weight="bold" font-size="6.5" fill="#5c4314">JS</text></svg><span class="tab c-blue" style="letter-spacing:0.198px;left:683px">gulpfile.js</span><svg class="abs" style="left:744px;top:9px" width="8" height="8" viewBox="0 0 8 8"><path d="M0.5 0.5l7 7M7.5 0.5l-7 7" stroke="#686b6d" stroke-width="1"/></svg><svg class="abs" style="left:765px;top:9px" width="20" height="10" viewBox="0 0 20 10"><path d="M0 3.500h5L2.500 6.500z" fill="#afb1b3"/><path d="M6 1.500h8M6 4h8M6 6.500h8M6 9h8" stroke="#afb1b3" stroke-width="1"/><text x="15" y="9" font-size="7" fill="#8a8c8e" font-family="Liberation Sans, sans-serif">3</text></svg></div>
<div class="abs tabs" style="left:1128px;width:791px"><div class="abs" style="left:1px;top:0;width:113px;height:27px;background:#4e5254;border-bottom:3px solid #4a88c7"></div><svg class="abs" style="left:11px;top:5px" width="16" height="16" viewBox="0 0 16 16"><path d="M6.900 1H12v14H2V5.700h4.900z" fill="#a3acb2" opacity=".85"/><path d="M6 1v3.800H2.200z" fill="#a3acb2"/><rect x="5.300" y="6.600" width="10.700" height="9.400" fill="#4e5254"/><text x="5.300" y="14.400" font-family="Liberation Sans, sans-serif" font-size="8.800" fill="#b0b9bf" textLength="10.200" lengthAdjust="spacingAndGlyphs">{}</text><rect x="9.900" y="9.300" width="1.200" height="3.600" fill="#b0b9bf"/></svg><span class="tab" style="letter-spacing:0.185px;left:28.8px">config.json</span><svg class="abs" style="left:97.7px;top:9px" width="8" height="8" viewBox="0 0 8 8"><path d="M0.5 0.5l7 7M7.5 0.5l-7 7" stroke="#686b6d" stroke-width="1"/></svg></div>
<div class="abs ed" style="left:337px;width:791px"><div class="abs gut" style="left:0;width:60px"></div><div class="abs " style="left:60px;top:0;width:1px;height:891px;background:#555555"></div><div class="abs curline" style="left:0;top:374px;width:780px"></div><div class="abs " style="left:0;top:374px;width:60px;height:22px;background:#353739"></div><div class="abs vcs" style="left:51px;top:242px"></div><div class="abs vcs" style="left:51px;top:330px"></div><div class="abs vcs" style="left:51px;top:462px"></div><div class="abs vcs" style="left:51px;top:572px"></div><div class="abs vcs" style="left:51px;top:594px"></div><div class="abs vcs" style="left:51px;top:704px"></div><div class="abs vcs" style="left:51px;top:814px"></div><div class="abs guide" style="left:100px;top:484px;height:242px"></div><div class="abs guide" style="left:132px;top:506px;height:22px"></div><div class="abs guide" style="left:132px;top:660px;height:22px"></div><div class="abs guide" style="left:100px;top:836px;height:44px"></div><div class="ln" style="left:0;top:1px;width:21px;color:#606366">1</div><div class="cl" style="left:66px;top:1px"><span class="k">const</span> {src<span class="k">,</span> dest<span class="k">,</span> watch<span class="k">,</span> <span class="p">series</span><span class="k">,</span> <span class="p">parallel</span>} = require(<span class="s">'gulp'</span>)<span class="k">,</span></div><div class="ln" style="left:0;top:23px;width:21px;color:#606366">2</div><div class="cl" style="left:66px;top:23px">    <span class="f w">csslint</span> = require(<span class="s">'gulp-csslint'</span>)<span class="k">,</span></div><div class="ln" style="left:0;top:45px;width:21px;color:#606366">3</div><div class="cl" style="left:66px;top:45px">    <span class="f w">concatcss</span> = require(<span class="s">'gulp-concat-css'</span>)<span class="k">,</span></div><div class="ln" style="left:0;top:67px;width:21px;color:#606366">4</div><div class="cl" style="left:66px;top:67px">    <span class="f w">uglifycss</span> = require(<span class="s">'gulp-uglifycss'</span>)<span class="k">,</span></div><div class="ln" style="left:0;top:89px;width:21px;color:#606366">5</div><div class="cl" style="left:66px;top:89px">    <span class="p">stylish</span> = require(<span class="s">'jshint-stylish'</span>)<span class="k">,</span></div><div class="ln" style="left:0;top:111px;width:21px;color:#606366">6</div><div class="cl" style="left:66px;top:111px">    <span class="f">jshint</span> = require(<span class="s">'gulp-jshint'</span>)<span class="k">,</span></div><div class="ln" style="left:0;top:133px;width:21px;color:#606366">7</div><div class="cl" style="left:66px;top:133px">    <span class="f">uglify</span> = require(<span class="s">'gulp-uglify'</span>)<span class="k">,</span></div><div class="ln" style="left:0;top:155px;width:21px;color:#606366">8</div><div class="cl" style="left:66px;top:155px">    <span class="f">concat</span> = require(<span class="s">'gulp-concat'</span>)<span class="k">,</span></div><div class="ln" style="left:0;top:177px;width:21px;color:#606366">9</div><div class="cl" style="left:66px;top:177px">    <span class="f">rename</span> = require(<span class="s">'gulp-rename'</span>)<span class="k">,</span></div><div class="ln" style="left:0;top:199px;width:21px;color:#606366">10</div><div class="cl" style="left:66px;top:199px">    <span class="f w">gulpif</span> = require(<span class="s">'gulp-if'</span>)<span class="k">,</span></div><div class="ln" style="left:0;top:221px;width:21px;color:#606366">11</div><div class="cl" style="left:66px;top:221px">    <span class="bi">del</span> = require(<span class="s">'del'</span>)<span class="k">,</span></div><div class="ln" style="left:0;top:243px;width:21px;color:#606366">12</div><div class="cl" style="left:66px;top:243px">    config = require(<span class="s">'./config.json'</span>)<span class="k">;</span></div><div class="ln" style="left:0;top:265px;width:21px;color:#606366">13</div><div class="ln" style="left:0;top:287px;width:21px;color:#606366">14</div><div class="cl" style="left:66px;top:287px"><span class="c">// </span><span class="kr">파일</span> <span class="kr">삭제</span></div><div class="ln" style="left:0;top:309px;width:21px;color:#606366">15</div><div class="cl" style="left:66px;top:309px"><span class="k">function </span><span class="f">clean</span>() {</div><div class="ln" style="left:0;top:331px;width:21px;color:#606366">16</div><div class="cl" style="left:66px;top:331px">    <span class="k">return </span><span class="bi">del</span>(<span class="hint" style="width:63px;margin:2px 3px 0 3px">patterns:</span>[config.path.js.dest + <span class="s">'*'</span>])<span class="k">;</span></div><div class="ln" style="left:0;top:353px;width:21px;color:#606366">17</div><div class="cl" style="left:66px;top:353px">}</div><div class="ln" style="left:0;top:375px;width:21px;color:#a4a3a3">18</div><div class="ln" style="left:0;top:397px;width:21px;color:#606366">19</div><div class="cl" style="left:66px;top:397px"><span class="c">// NPM </span><span class="kr">설치</span> <span class="kr">모듈</span><span class="c"> : gulp-</span><span class="w"><span class="c">csslint</span></span><span class="c">, gulp-concat-css, gulp-</span><span class="w"><span class="c">uglifycss</span></span></div><div class="ln" style="left:0;top:419px;width:21px;color:#606366">20</div><div class="cl" style="left:66px;top:419px"><span class="c">// CSS </span><span class="kr">문법</span> <span class="kr">검사</span><span class="c"> &gt; </span><span class="kr">병합</span><span class="c"> &gt; </span><span class="kr">압축</span></div><div class="ln" style="left:0;top:441px;width:21px;color:#606366">21</div><div class="cl" style="left:66px;top:441px"><span class="k">function </span><span class="f">styles</span>() {</div><div class="ln" style="left:0;top:463px;width:21px;color:#606366">22</div><div class="cl" style="left:66px;top:463px">    <span class="k">return </span><span class="w">src</span>(config.path.css.src)</div><div class="ln" style="left:0;top:485px;width:21px;color:#606366">23</div><div class="cl" style="left:66px;top:485px">        .<span class="f">pipe</span>(<span class="f">gulpif</span>(config.lint<span class="k">,</span> <span class="f">csslint</span>(<span class="hint" style="width:59px;margin:2px 3px 0 3px">options:</span>{</div><div class="ln" style="left:0;top:507px;width:21px;color:#606366">24</div><div class="cl" style="left:66px;top:507px">            <span class="s">'import'</span>: <span class="k">false</span></div><div class="ln" style="left:0;top:529px;width:21px;color:#606366">25</div><div class="cl" style="left:66px;top:529px">        })))</div><div class="ln" style="left:0;top:551px;width:21px;color:#606366">26</div><div class="cl" style="left:66px;top:551px">        .<span class="f">pipe</span>(<span class="f">gulpif</span>(config.lint<span class="k">,</span> <span class="f">csslint</span>.<span class="f">formatter</span>()))</div><div class="ln" style="left:0;top:573px;width:21px;color:#606366">27</div><div class="cl" style="left:66px;top:573px">        .<span class="f">pipe</span>(<span class="f">gulpif</span>(config.concat<span class="k">,</span> <span class="f">concatcss</span>(config.path.css.filename)))</div><div class="ln" style="left:0;top:595px;width:21px;color:#606366">28</div><div class="cl" style="left:66px;top:595px">        .<span class="f">pipe</span>(<span class="f">gulpif</span>(config.rename<span class="k">,</span> <span class="w">dest</span>(config.path.css.dest)))</div><div class="ln" style="left:0;top:617px;width:21px;color:#606366">29</div><div class="cl" style="left:66px;top:617px">        .<span class="f">pipe</span>(<span class="f">gulpif</span>(config.uglify<span class="k">,</span> <span class="f">uglifycss</span>()))</div><div class="ln" style="left:0;top:639px;width:21px;color:#606366">30</div><div class="cl" style="left:66px;top:639px">        .<span class="f">pipe</span>(<span class="f">gulpif</span>(config.rename<span class="k">,</span> <span class="f">rename</span>(<span class="hint" style="width:33px;margin:2px 3px 0 3px">obj:</span>{</div><div class="ln" style="left:0;top:661px;width:21px;color:#606366">31</div><div class="cl" style="left:66px;top:661px">            <span class="p">suffix</span>: <span class="s">'.min'</span></div><div class="ln" style="left:0;top:683px;width:21px;color:#606366">32</div><div class="cl" style="left:66px;top:683px">        })))</div><div class="ln" style="left:0;top:705px;width:21px;color:#606366">33</div><div class="cl" style="left:66px;top:705px">        .<span class="f">pipe</span>(<span class="w">dest</span>(config.path.css.dest))</div><div class="ln" style="left:0;top:727px;width:21px;color:#606366">34</div><div class="cl" style="left:66px;top:727px">}</div><div class="ln" style="left:0;top:749px;width:21px;color:#606366">35</div><div class="ln" style="left:0;top:771px;width:21px;color:#606366">36</div><div class="cl" style="left:66px;top:771px"><span class="c">// JS </span><span class="kr">문법</span> <span class="kr">검사</span></div><div class="ln" style="left:0;top:793px;width:21px;color:#606366">37</div><div class="cl" style="left:66px;top:793px"><span class="k">function </span><span class="f">jsHint</span>() {</div><div class="ln" style="left:0;top:815px;width:21px;color:#606366">38</div><div class="cl" style="left:66px;top:815px">    <span class="k">return </span><span class="w">src</span>(config.path.js.src)</div><div class="ln" style="left:0;top:837px;width:21px;color:#606366">39</div><div class="cl" style="left:66px;top:837px">        .<span class="f">pipe</span>(<span class="f">jshint</span>())</div><div class="ln" style="left:0;top:859px;width:21px;color:#606366">40</div><div class="cl" style="left:66px;top:859px">        .<span class="f">pipe</span>(<span class="f">jshint</span>.<span class="p">reporter</span>(<span class="p">stylish</span>))<span class="k">;</span></div><div class="ln" style="left:0;top:881px;width:21px;color:#606366">41</div><div class="cl" style="left:66px;top:881px">}</div><svg class="abs" style="left:56px;top:314.5px" width="9" height="12" viewBox="0 0 9 12"><path d="M0.500 0.500h8v6.500L4.500 11.500 0.500 7z" fill="#2b2b2b" stroke="#606366"/><path d="M2.500 4.500h4" stroke="#606366"/></svg><svg class="abs" style="left:56px;top:402.5px" width="9" height="12" viewBox="0 0 9 12"><path d="M0.500 0.500h8v6.500L4.500 11.500 0.500 7z" fill="#2b2b2b" stroke="#606366"/><path d="M2.500 4.500h4" stroke="#606366"/></svg><svg class="abs" style="left:56px;top:446.5px" width="9" height="12" viewBox="0 0 9 12"><path d="M0.500 0.500h8v6.500L4.500 11.500 0.500 7z" fill="#2b2b2b" stroke="#606366"/><path d="M2.500 4.500h4" stroke="#606366"/></svg><svg class="abs" style="left:56px;top:490.5px" width="9" height="12" viewBox="0 0 9 12"><path d="M0.500 0.500h8v6.500L4.500 11.500 0.500 7z" fill="#2b2b2b" stroke="#606366"/><path d="M2.500 4.500h4" stroke="#606366"/></svg><svg class="abs" style="left:56px;top:644.5px" width="9" height="12" viewBox="0 0 9 12"><path d="M0.500 0.500h8v6.500L4.500 11.500 0.500 7z" fill="#2b2b2b" stroke="#606366"/><path d="M2.500 4.500h4" stroke="#606366"/></svg><svg class="abs" style="left:56px;top:798.5px" width="9" height="12" viewBox="0 0 9 12"><path d="M0.500 0.500h8v6.500L4.500 11.500 0.500 7z" fill="#2b2b2b" stroke="#606366"/><path d="M2.500 4.500h4" stroke="#606366"/></svg><svg class="abs" style="left:56px;top:356px" width="9" height="12" viewBox="0 0 9 12"><path d="M0.500 11.500h8v-6.500L4.500 0.500 0.500 5z" fill="#2b2b2b" stroke="#606366"/><path d="M2.500 7.500h4" stroke="#606366"/></svg><svg class="abs" style="left:56px;top:422px" width="9" height="12" viewBox="0 0 9 12"><path d="M0.500 11.500h8v-6.500L4.500 0.500 0.500 5z" fill="#2b2b2b" stroke="#606366"/><path d="M2.500 7.500h4" stroke="#606366"/></svg><svg class="abs" style="left:56px;top:532px" width="9" height="12" viewBox="0 0 9 12"><path d="M0.500 11.500h8v-6.500L4.500 0.500 0.500 5z" fill="#2b2b2b" stroke="#606366"/><path d="M2.500 7.500h4" stroke="#606366"/></svg><svg class="abs" style="left:56px;top:686px" width="9" height="12" viewBox="0 0 9 12"><path d="M0.500 11.500h8v-6.500L4.500 0.500 0.500 5z" fill="#2b2b2b" stroke="#606366"/><path d="M2.500 7.500h4" stroke="#606366"/></svg><svg class="abs" style="left:56px;top:730px" width="9" height="12" viewBox="0 0 9 12"><path d="M0.500 11.500h8v-6.500L4.500 0.500 0.500 5z" fill="#2b2b2b" stroke="#606366"/><path d="M2.500 7.500h4" stroke="#606366"/></svg><svg class="abs" style="left:56px;top:884px" width="9" height="12" viewBox="0 0 9 12"><path d="M0.500 11.500h8v-6.500L4.500 0.500 0.500 5z" fill="#2b2b2b" stroke="#606366"/><path d="M2.500 7.500h4" stroke="#606366"/></svg><div class="abs " style="left:780px;top:0;width:11px;height:891px;background:#2b2b2b"></div><div class="abs " style="left:782px;top:17px;width:8px;height:504px;background:#505254"></div><div class="abs " style="left:779px;top:2px;width:10px;height:10px;background:#8a7f63"></div><div class="abs " style="left:773px;top:152px;width:2px;height:5px;background:#3d6185"></div><div class="abs " style="left:773px;top:202px;width:2px;height:5px;background:#3d6185"></div><div class="abs " style="left:773px;top:277px;width:2px;height:5px;background:#3d6185"></div><div class="abs " style="left:777px;top:279px;width:14px;height:2px;background:#847a60"></div><div class="abs " style="left:773px;top:414px;width:2px;height:5px;background:#3d6185"></div><div class="abs " style="left:777px;top:416px;width:14px;height:2px;background:#847a60"></div><div class="abs " style="left:773px;top:477px;width:2px;height:5px;background:#3d6185"></div><div class="abs " style="left:777px;top:479px;width:14px;height:2px;background:#847a60"></div><div class="abs " style="left:773px;top:651px;width:2px;height:5px;background:#3d6185"></div><div class="abs " style="left:777px;top:653px;width:14px;height:2px;background:#847a60"></div><div class="abs " style="left:773px;top:690px;width:2px;height:5px;background:#3d6185"></div><div class="abs " style="left:777px;top:692px;width:14px;height:2px;background:#847a60"></div><div class="abs " style="left:773px;top:341px;width:2px;height:13px;background:#3d6185"></div><div class="abs " style="left:777px;top:353px;width:14px;height:2px;background:#847a60"></div><div class="abs " style="left:773px;top:565px;width:2px;height:27px;background:#3d6185"></div><div class="abs " style="left:777px;top:565px;width:14px;height:2px;background:#847a60"></div><div class="abs " style="left:777px;top:591px;width:14px;height:2px;background:#847a60"></div><div class="abs " style="left:777px;top:741px;width:14px;height:2px;background:#847a60"></div><div class="abs " style="left:773px;top:792px;width:2px;height:12px;background:#3d6185"></div><div class="abs " style="left:777px;top:792px;width:14px;height:2px;background:#847a60"></div><div class="abs " style="left:777px;top:802px;width:14px;height:2px;background:#847a60"></div></div>
<div class="abs ed" style="left:1128px;width:791px"><div class="abs gut" style="left:0;width:61px"></div><div class="abs " style="left:61px;top:0;width:1px;height:891px;background:#555555"></div><div class="abs curline" style="left:0;top:440px;width:791px"></div><div class="abs " style="left:0;top:440px;width:61px;height:22px;background:#353739"></div><div class="abs " style="left:51px;top:0;width:1px;height:462px;background:#50635b"></div><div class="abs guide" style="left:85px;top:132px;height:286px"></div><div class="abs guide" style="left:101px;top:154px;height:132px"></div><div class="abs guide" style="left:117px;top:176px;height:44px"></div><div class="abs guide" style="left:101px;top:330px;height:66px"></div><div class="ln" style="left:0;top:1px;width:21.500px;color:#606366">1</div><div class="cl" style="left:67px;top:1px"><span style="color:#ffef28;background:#3b514d;display:inline-block;height:22px;margin-top:-1px;padding-top:1px;vertical-align:top">{</span></div><div class="ln" style="left:0;top:23px;width:21.500px;color:#606366">2</div><div class="cl" style="left:67px;top:23px">  <span class="p">"lint"</span><span class="k">:</span> <span class="k">true</span><span class="k">,</span></div><div class="ln" style="left:0;top:45px;width:21.500px;color:#606366">3</div><div class="cl" style="left:67px;top:45px">  <span class="p">"concat"</span><span class="k">:</span> <span class="k">true</span><span class="k">,</span></div><div class="ln" style="left:0;top:67px;width:21.500px;color:#606366">4</div><div class="cl" style="left:67px;top:67px">  <span class="p">"uglify"</span><span class="k">:</span> <span class="k">true</span><span class="k">,</span></div><div class="ln" style="left:0;top:89px;width:21.500px;color:#606366">5</div><div class="cl" style="left:67px;top:89px">  <span class="p">"rename"</span><span class="k">:</span> <span class="k">true</span><span class="k">,</span></div><div class="ln" style="left:0;top:111px;width:21.500px;color:#606366">6</div><div class="cl" style="left:67px;top:111px">  <span class="p">"path"</span><span class="k">:</span> {</div><div class="ln" style="left:0;top:133px;width:21.500px;color:#606366">7</div><div class="cl" style="left:67px;top:133px">    <span class="p">"css"</span><span class="k">:</span> {</div><div class="ln" style="left:0;top:155px;width:21.500px;color:#606366">8</div><div class="cl" style="left:67px;top:155px">      <span class="p">"src"</span><span class="k">:</span> [</div><div class="ln" style="left:0;top:177px;width:21.500px;color:#606366">9</div><div class="cl" style="left:67px;top:177px">        <span class="s">"src/css/**/*.css"</span><span class="k">,</span></div><div class="ln" style="left:0;top:199px;width:21.500px;color:#606366">10</div><div class="cl" style="left:67px;top:199px">        <span class="s">"src/css/style.css"</span></div><div class="ln" style="left:0;top:221px;width:21.500px;color:#606366">11</div><div class="cl" style="left:67px;top:221px">      ]<span class="k">,</span></div><div class="ln" style="left:0;top:243px;width:21.500px;color:#606366">12</div><div class="cl" style="left:67px;top:243px">      <span class="p">"dest"</span><span class="k">:</span> <span class="s">"dist/css/"</span><span class="k">,</span></div><div class="ln" style="left:0;top:265px;width:21.500px;color:#606366">13</div><div class="cl" style="left:67px;top:265px">      <span class="p">"filename"</span><span class="k">:</span> <span class="s">"style.css"</span></div><div class="ln" style="left:0;top:287px;width:21.500px;color:#606366">14</div><div class="cl" style="left:67px;top:287px">    }<span class="k">,</span></div><div class="ln" style="left:0;top:309px;width:21.500px;color:#606366">15</div><div class="cl" style="left:67px;top:309px">    <span class="p">"js"</span><span class="k">:</span> {</div><div class="ln" style="left:0;top:331px;width:21.500px;color:#606366">16</div><div class="cl" style="left:67px;top:331px">      <span class="p">"src"</span><span class="k">:</span> <span class="s">"src/js/libs/**/*.js"</span><span class="k">,</span></div><div class="ln" style="left:0;top:353px;width:21.500px;color:#606366">17</div><div class="cl" style="left:67px;top:353px">      <span class="p">"dest"</span><span class="k">:</span> <span class="s">"dist/"</span><span class="k">,</span></div><div class="ln" style="left:0;top:375px;width:21.500px;color:#606366">18</div><div class="cl" style="left:67px;top:375px">      <span class="p">"filename"</span><span class="k">:</span> <span class="s">"DOM</span><span class="w"><span class="s">library</span></span><span class="s">.js"</span></div><div class="ln" style="left:0;top:397px;width:21.500px;color:#606366">19</div><div class="cl" style="left:67px;top:397px">    }</div><div class="ln" style="left:0;top:419px;width:21.500px;color:#606366">20</div><div class="cl" style="left:67px;top:419px">  }</div><div class="ln" style="left:0;top:441px;width:21.500px;color:#a4a3a3">21</div><div class="cl" style="left:67px;top:441px"><span style="color:#ffef28;background:#3b514d;display:inline-block;height:22px;margin-top:-1px;padding-top:1px;vertical-align:top">}</span><span style="display:inline-block;width:2px;height:18px;background:#bbbbbb;vertical-align:top;margin-top:2px"></span></div><svg class="abs" style="left:57px;top:6.5px" width="9" height="12" viewBox="0 0 9 12"><path d="M0.500 0.500h8v6.500L4.500 11.500 0.500 7z" fill="#2b2b2b" stroke="#606366"/><path d="M2.500 4.500h4" stroke="#606366"/></svg><svg class="abs" style="left:57px;top:116.5px" width="9" height="12" viewBox="0 0 9 12"><path d="M0.500 0.500h8v6.500L4.500 11.500 0.500 7z" fill="#2b2b2b" stroke="#606366"/><path d="M2.500 4.500h4" stroke="#606366"/></svg><svg class="abs" style="left:57px;top:138.5px" width="9" height="12" viewBox="0 0 9 12"><path d="M0.500 0.500h8v6.500L4.500 11.500 0.500 7z" fill="#2b2b2b" stroke="#606366"/><path d="M2.500 4.500h4" stroke="#606366"/></svg><svg class="abs" style="left:57px;top:160.5px" width="9" height="12" viewBox="0 0 9 12"><path d="M0.500 0.500h8v6.500L4.500 11.500 0.500 7z" fill="#2b2b2b" stroke="#606366"/><path d="M2.500 4.500h4" stroke="#606366"/></svg><svg class="abs" style="left:57px;top:314.5px" width="9" height="12" viewBox="0 0 9 12"><path d="M0.500 0.500h8v6.500L4.500 11.500 0.500 7z" fill="#2b2b2b" stroke="#606366"/><path d="M2.500 4.500h4" stroke="#606366"/></svg><svg class="abs" style="left:57px;top:224px" width="9" height="12" viewBox="0 0 9 12"><path d="M0.500 11.500h8v-6.500L4.500 0.500 0.500 5z" fill="#2b2b2b" stroke="#606366"/><path d="M2.500 7.500h4" stroke="#606366"/></svg><svg class="abs" style="left:57px;top:290px" width="9" height="12" viewBox="0 0 9 12"><path d="M0.500 11.500h8v-6.500L4.500 0.500 0.500 5z" fill="#2b2b2b" stroke="#606366"/><path d="M2.500 7.500h4" stroke="#606366"/></svg><svg class="abs" style="left:57px;top:400px" width="9" height="12" viewBox="0 0 9 12"><path d="M0.500 11.500h8v-6.500L4.500 0.500 0.500 5z" fill="#2b2b2b" stroke="#606366"/><path d="M2.500 7.500h4" stroke="#606366"/></svg><svg class="abs" style="left:57px;top:422px" width="9" height="12" viewBox="0 0 9 12"><path d="M0.500 11.500h8v-6.500L4.500 0.500 0.500 5z" fill="#2b2b2b" stroke="#606366"/><path d="M2.500 7.500h4" stroke="#606366"/></svg><svg class="abs" style="left:57px;top:444px" width="9" height="12" viewBox="0 0 9 12"><path d="M0.500 11.500h8v-6.500L4.500 0.500 0.500 5z" fill="#2b2b2b" stroke="#606366"/><path d="M2.500 7.500h4" stroke="#606366"/></svg><svg class="abs" style="left:778px;top:3px" width="12" height="12" viewBox="0 0 12 12"><path d="M1 5l3 3 7-7" fill="none" stroke="#499c54" stroke-width="2"/><path d="M1 10.500l2-1.500 2 1.500 2-1.500 2 1.500 2-1.500" fill="none" stroke="#499c54" stroke-width="1"/></svg></div>
<div class="abs " id="hs" style=""></div>
<div class="abs " style="left:337px;top:949px;width:1582px;height:1px;background:#3a3c3e"></div>
<div class="abs " id="tools" style=""><svg class="abs" style="left:32px;top:5px" width="11" height="10" viewBox="0 0 11 10"><path d="M0 1.500h2M3.500 1.500h7.500M0 5h2M3.500 5h7.500M0 8.500h2M3.500 8.500h7.500" stroke="#afb1b3" stroke-width="1.600"/></svg><span class="bt" style="left:47.400px;letter-spacing:-1.18px"><u>6</u>: TODO</span><svg class="abs" style="left:110px;top:4px" width="12" height="12" viewBox="0 0 12 12"><rect width="12" height="12" fill="#afb1b3"/><path d="M2.500 3l3 2.500-3 2.500M6.500 9h3.500" fill="none" stroke="#3c3f41" stroke-width="1.300"/></svg><span class="bt" style="letter-spacing:-0.281px;left:126.5px;">Terminal</span><svg class="abs" style="left:196px;top:4px" width="12" height="13" viewBox="0 0 12 13"><path d="M2 1v11M2 9h5.500V3.500" fill="none" stroke="#afb1b3" stroke-width="1.700"/><path d="M4.500 5.500l3-3.500 3 3.500z" fill="#afb1b3"/></svg><span class="bt" style="left:212.700px;letter-spacing:-0.676px"><u>9</u>: Version Control</span><div class="abs" style="left:1822px;top:4px;width:13.500px;height:13.500px;border-radius:7px 7px 1px 7px;background:#c75450;color:#fff;font-size:10px;line-height:13.500px;text-align:center">2</div><span class="bt" style="letter-spacing:-0.722px;left:1839.3px;">Event Log</span></div>
<div class="abs " id="status" style=""><svg class="abs" style="left:4px;top:4px" width="14" height="13" viewBox="0 0 14 13"><rect x="2.500" y="0.500" width="10.500" height="10" fill="none" stroke="#9a9da0"/><path d="M0.700 2.500V12.300H10.500" fill="none" stroke="#9a9da0"/></svg><span class="bt" style="top:-1px;letter-spacing:0.052px;left:26.2px;">Externally added files can be added to Git // View Files // Always Add // Don't Ask Again (today 오전 10:25)</span><span class="bt" style="top:-1px;letter-spacing:0.164px;left:1474px;">21:2</span><span class="bt" style="top:-1px;letter-spacing:-1.047px;left:1511px;">LF</span><span class="bt" style="top:-1px;letter-spacing:0.176px;left:1536px;">UTF-8</span><span class="bt" style="top:-1px;letter-spacing:-0.191px;left:1584px;">2 spaces</span><span class="bt" style="top:-1px;letter-spacing:-0.131px;left:1645px;">JSON: asp.net config</span><span class="bt" style="top:-1px;letter-spacing:0.152px;left:1773px;">Git: master</span><svg class="abs" style="left:1846px;top:3px" width="14" height="13" viewBox="0 0 14 13"><rect x="4" y="7.300" width="8.200" height="4.900" fill="#c4c6c8"/><path d="M1.800 8V4.300a2.500 2.500 0 0 1 5 0V7.500" fill="none" stroke="#c4c6c8" stroke-width="1.600"/></svg><svg class="abs" style="left:1871px;top:2px" width="14" height="15" viewBox="0 0 14 15"><path d="M4.200 1.300h5.800l0.800 3.600H3.400z" fill="#c4c6c8"/><rect x="0.800" y="4.700" width="12.400" height="1.700" fill="#c4c6c8"/><path d="M4 6.400h6.200v3.200q-0.600 1.700-3.100 1.700T4 9.600z" fill="#c4c6c8"/><rect x="5" y="7.300" width="1.500" height="1.300" fill="#3c3f41"/><rect x="7.700" y="7.300" width="1.500" height="1.300" fill="#3c3f41"/><path d="M1.500 14.200q0.300-2.600 3.200-3h4.800q2.900 0.400 3.200 3z" fill="#c4c6c8"/></svg><svg class="abs" style="left:1893px;top:2px" width="20" height="17" viewBox="0 0 20 17"><path d="M4.300 11.200a3.300 3.300 0 0 1 0.400-6.500 4.700 4.700 0 0 1 8.900-0.200 3.400 3.400 0 0 1 2.200 4.500L12 11.200z" fill="#c4c6c8"/><text x="6.700" y="9.500" font-size="8" font-weight="bold" fill="#3c3f41" font-family="Liberation Sans, sans-serif">?</text><circle cx="14.500" cy="12.300" r="3.700" fill="#3c3f41"/><circle cx="14.500" cy="12.300" r="2.300" fill="none" stroke="#c4c6c8" stroke-width="2" stroke-dasharray="1.200 0.610"/><circle cx="14.500" cy="12.300" r="1.700" fill="none" stroke="#c4c6c8" stroke-width="1"/></svg></div>
<div class="abs " style="left:0;top:1013px;width:1919px;height:1px;background:#2a3546"></div>
<div class="abs " style="left:640px;top:1012px;width:42px;height:2px;background:#c87b3a"></div>
<div class="abs note" style="left:1574px;top:799px;width:340px;height:70px"><svg class="abs" style="left:10px;top:7px" width="14.500" height="14.500" viewBox="0 0 14 14"><circle cx="7" cy="7" r="7" fill="#3592c4"/><rect x="6" y="5.800" width="2" height="5.200" fill="#26313a"/><circle cx="7" cy="3.700" r="1.200" fill="#26313a"/></svg><span class="abs" style="letter-spacing:-0.074px;left:31px;top:3px;font-size:12.500px;white-space:pre;line-height:20px;color:#d2d2d2">Update Dependencies</span><span class="abs" style="letter-spacing:-0.048px;left:31px;top:21px;font-size:12.500px;white-space:pre;line-height:20px;color:#d2d2d2">From </span><span class="abs link" style="letter-spacing:0.261px;left:63.4px;top:21px;font-size:12.500px;white-space:pre;line-height:20px;">gulp-training₩training₩package.json</span><span class="abs link" style="letter-spacing:0.062px;left:31px;top:44px;font-size:12.500px;white-space:pre;line-height:20px;">Run 'npm install'</span><span class="abs link" style="letter-spacing:0.055px;left:140px;top:44px;font-size:12.500px;white-space:pre;line-height:20px;">Don't ask again</span></div>
<div class="abs note" style="left:1574px;top:881px;width:340px;height:82px"><svg class="abs" style="left:10px;top:11px" width="14.500" height="14.500" viewBox="0 0 14 14"><circle cx="7" cy="7" r="7" fill="#3592c4"/><rect x="6" y="5.800" width="2" height="5.200" fill="#26313a"/><circle cx="7" cy="3.700" r="1.200" fill="#26313a"/></svg><span class="abs" style="letter-spacing:-0.029px;left:31px;top:7.5px;font-size:12.500px;white-space:pre;line-height:20px;color:#d2d2d2">Externally added files can be added to Git</span><span class="abs link" style="letter-spacing:-0.123px;left:31px;top:27px;font-size:12.500px;white-space:pre;line-height:20px;">View Files</span><span class="abs link" style="letter-spacing:-0.073px;left:102.7px;top:27px;font-size:12.500px;white-space:pre;line-height:20px;">Always Add</span><span class="abs link" style="letter-spacing:0.115px;left:182.7px;top:27px;font-size:12.500px;white-space:pre;line-height:20px;">Don't Ask Again</span><div class="abs" style="left:0;top:59px;width:338px;height:21px;background:#3c3e40;color:#9a9a9a;text-align:center;line-height:20px;font-size:11.500px">1 more</div></div>
</body></html>
